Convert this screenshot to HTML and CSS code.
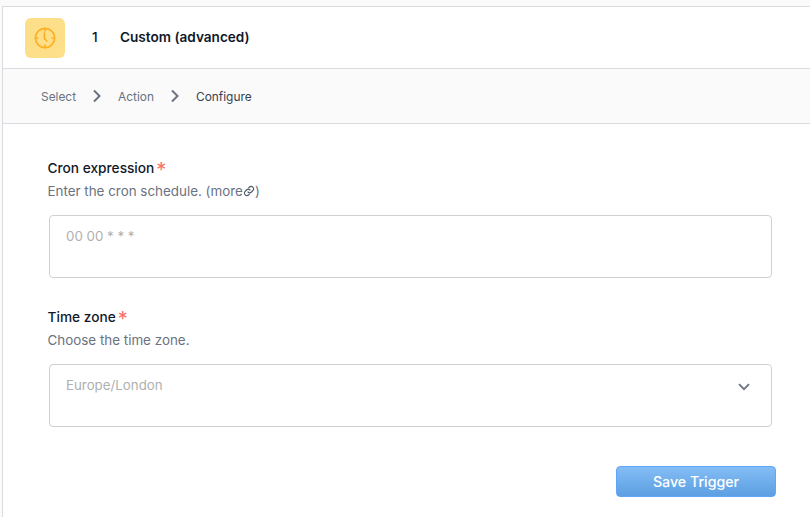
FILE: index.html
```html
<!DOCTYPE html>
<html lang="en">
<head>
<meta charset="utf-8">
<title>Custom (advanced)</title>
<link rel="stylesheet" href="styles.css">
</head>
<body>
<main class="card">
  <header class="head">
    <div class="tile">
      <svg class="clock" width="24" height="24" viewBox="0 0 24 24" fill="none" stroke="#fdb022" stroke-width="1.7" stroke-linecap="round">
        <circle cx="12" cy="12" r="9.6"/>
        <path d="M12 2.4v2.4M12 19.2v2.4M2.4 12h2.4M19.2 12h2.4M11.4 6.8v5.6l2.4 2.6"/>
      </svg>
    </div>
    <span class="num">1</span>
    <span class="title">Custom (advanced)</span>
  </header>
  <nav class="crumbs">
    <span>Select</span>
    <svg class="chev" width="10" height="14" viewBox="0 0 10 14" fill="none" stroke="#6b7280" stroke-width="2"><path d="M2 1.5 7.5 7 2 12.5"/></svg>
    <span>Action</span>
    <svg class="chev" width="10" height="14" viewBox="0 0 10 14" fill="none" stroke="#6b7280" stroke-width="2"><path d="M2 1.5 7.5 7 2 12.5"/></svg>
    <span class="current">Configure</span>
  </nav>
  <form class="form">
    <section class="field">
      <div class="label">Cron expression<span class="req">*</span></div>
      <div class="help">Enter the cron schedule. (more<svg class="link" width="12" height="12" viewBox="0 0 24 24" fill="none" stroke="#4b5563" stroke-width="2.2" stroke-linecap="round"><path d="M10 14a5 5 0 0 0 7 0l3-3a5 5 0 0 0-7-7l-1.5 1.5"/><path d="M14 10a5 5 0 0 0-7 0l-3 3a5 5 0 0 0 7 7l1.5-1.5"/></svg>)</div>
      <div class="box"><span class="ph">00 00 * * *</span></div>
    </section>
    <section class="field second">
      <div class="label">Time zone<span class="req">*</span></div>
      <div class="help">Choose the time zone.</div>
      <div class="box select">
        <span class="ph">Europe/London</span>
        <svg class="caret" width="12" height="8" viewBox="0 0 12 8" fill="none" stroke="#6b7280" stroke-width="1.8"><path d="M1 1.2 6 6.2 11 1.2"/></svg>
      </div>
    </section>
    <div class="actions"><button type="button" class="save">Save Trigger</button></div>
  </form>
</main>
</body>
</html>
```

FILE: styles.css
```css
html, body { margin: 0; height: 100%; overflow: hidden; }
body {
  background: #fafafa;
  padding: 6px 0 0 2px;
  box-sizing: border-box;
  font-family: Inter, "Liberation Sans", sans-serif;
  color: #101828;
}
.card {
  width: 820px;
  height: 520px;
  background: #fff;
  border: 1px solid #d9dbde;
  box-sizing: border-box;
}
.head {
  height: 59px;
  display: flex;
  align-items: center;
  padding: 0 0 2px 22px;
  border-bottom: 1px solid #d9dbde;
  box-sizing: content-box;
}
.tile {
  width: 40px;
  height: 40px;
  margin-top: 2px;
  border-radius: 6px;
  background: #fedf89;
  display: flex;
  align-items: center;
  justify-content: center;
}
.num {
  margin-left: 27px;
  width: 28px;
  font-size: 13.6px;
  font-weight: 500;
}
.title {
  font-size: 13.6px;
  font-weight: 600;
}
.crumbs {
  height: 54px;
  background: #fafafa;
  border-bottom: 1px solid #d9dbde;
  display: flex;
  align-items: center;
  padding-left: 38px;
  font-size: 11.9px;
  color: #6b7280;
}
.crumbs .chev { margin: 0 16px; }
.crumbs .current { color: #374151; }
.form { padding: 35px 0 0 44.5px; width: 724.5px; }
.label {
  height: 18px;
  font-size: 13.7px;
  font-weight: 500;
  line-height: 18px;
  color: #101828;
  display: flex;
}
.req {
  color: #f97066;
  font-size: 20px;
  line-height: 22px;
  margin-left: 2px;
  font-weight: 400;
}
.help {
  margin-top: 5px;
  font-size: 13.4px;
  line-height: 18px;
  color: #6b7280;
}
.link { vertical-align: -1px; }
.box {
  margin: 15px 0 0 1.5px;
  height: 63px;
  box-sizing: border-box;
  border: 1px solid #d0d0d0;
  border-radius: 4px;
  padding: 11px 16px;
  display: flex;
  justify-content: space-between;
  align-items: flex-start;
  font-size: 13.3px;
  line-height: 18px;
  color: #b0b0b0;
}
.second { margin-top: 30px; }
.caret { margin: 7px 5px 0 0; }
.actions { display: flex; justify-content: flex-end; margin: 39px -4px 0 0; }
.save {
  width: 160px;
  height: 31px;
  border: 1px solid #60a5fa;
  border-radius: 4px;
  background: linear-gradient(#84bdf5, #5c9fe2);
  color: #fff;
  font: 500 14.2px Inter, "Liberation Sans", sans-serif;
  padding: 0;
}
```
